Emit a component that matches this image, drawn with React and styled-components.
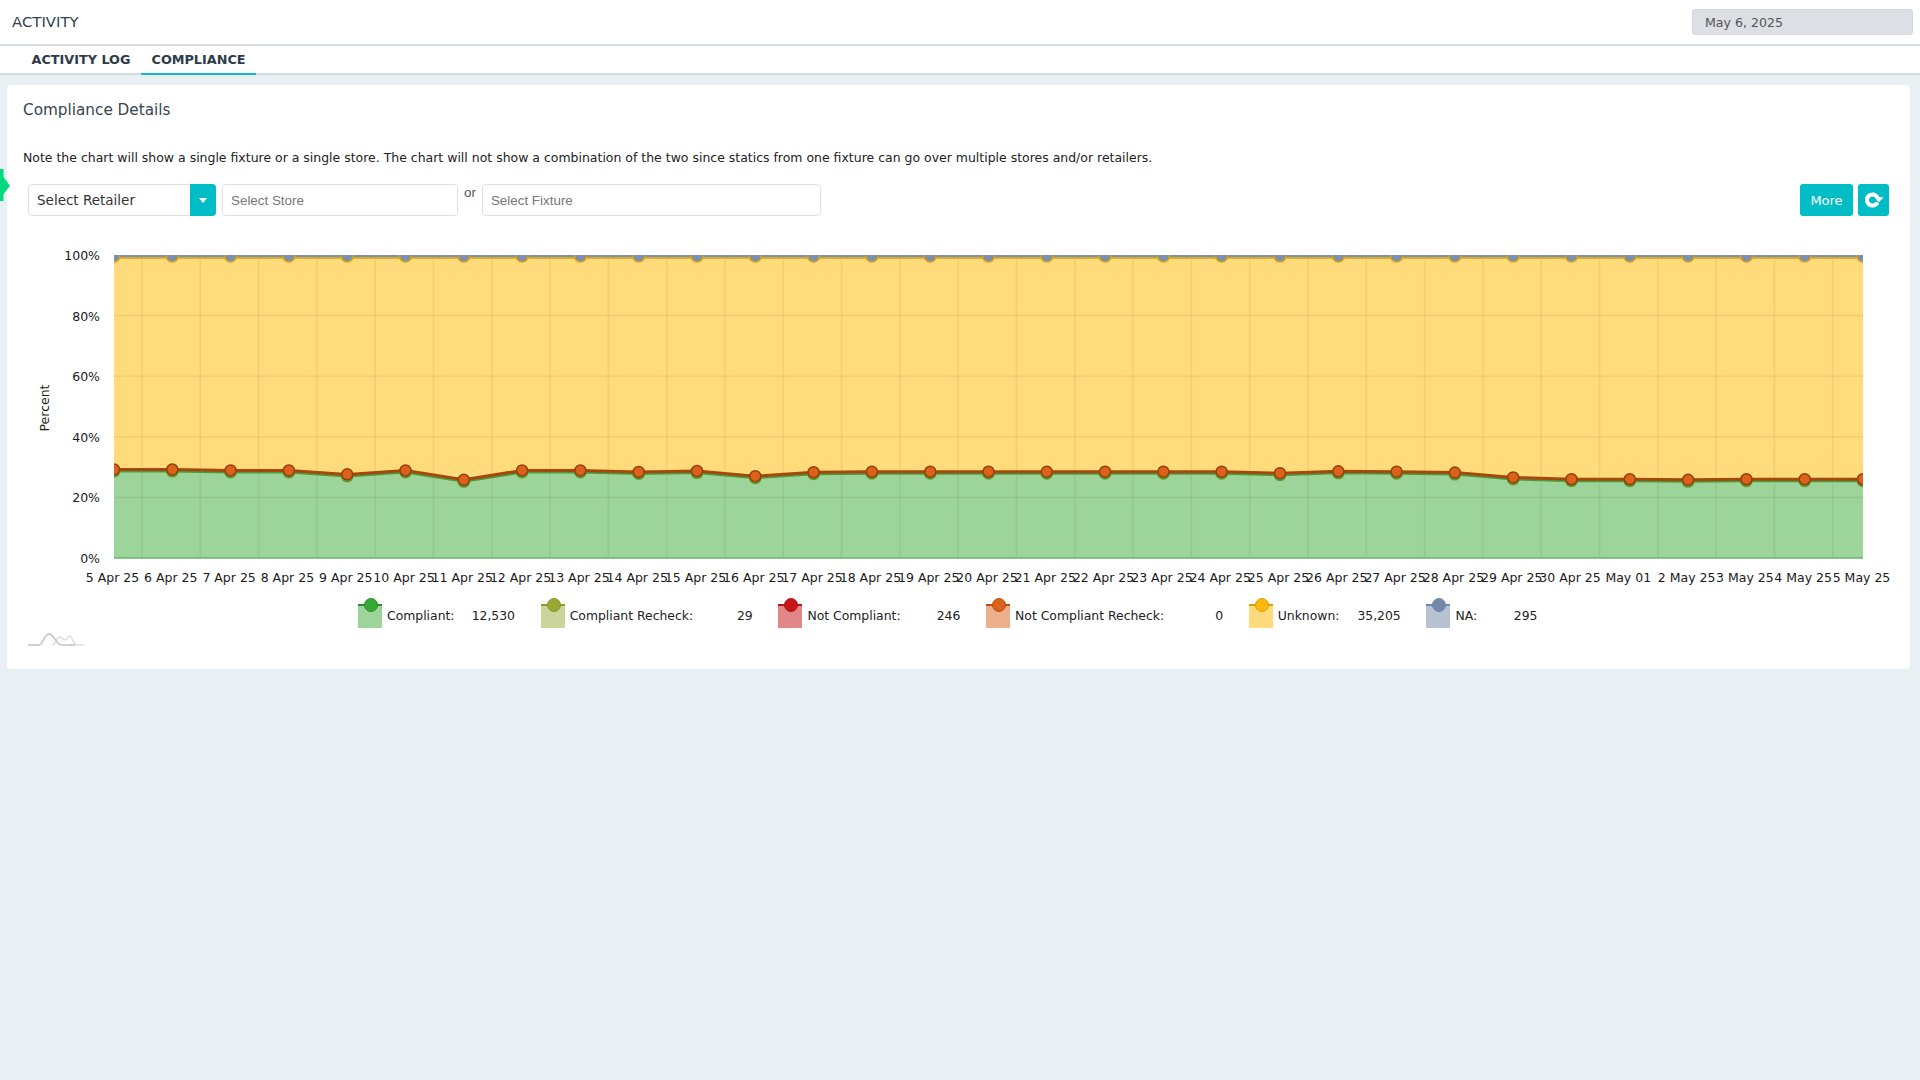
import styled, { createGlobalStyle } from "styled-components";

const GlobalStyle = createGlobalStyle`
  html, body {
    margin: 0;
    padding: 0;
    background: #e8f0f3;
  }
  * {
    box-sizing: border-box;
  }
`;

const sans = `"DejaVu Sans", Verdana, sans-serif`;

const Page = styled.div`
  min-height: 100vh;
  background: #e8f0f3;
  font-family: ${sans};
`;

const Header = styled.header`
  height: 46px;
  padding: 0 7px 0 12px;
  display: flex;
  align-items: center;
  justify-content: space-between;
  background: #fff;
  border-bottom: 2px solid #d3dde4;
`;

const PageTitle = styled.h1`
  margin: 0;
  font-size: 14.9px;
  font-weight: 400;
  color: #33414e;
`;

const DateField = styled.div`
  width: 221px;
  height: 26px;
  padding-left: 12px;
  display: flex;
  align-items: center;
  background: #dcdfe3;
  border: 1px solid #d5d9dd;
  border-radius: 3px;
  font-size: 12.6px;
  color: #555;
`;

const TabBar = styled.nav`
  height: 29px;
  padding-left: 21px;
  display: flex;
  background: #fff;
  border-bottom: 2px solid #d3dde4;
`;

const Tab = styled.div`
  height: 29px;
  padding: 0 10.5px;
  display: flex;
  align-items: center;
  font-size: 12.8px;
  font-weight: 700;
  color: #2d3b4a;
  border-bottom: 2px solid ${(p) => (p.$active ? "#1ab1e0" : "transparent")};
`;

const Main = styled.main`
  padding: 10px 10px 0 7px;
`;

const Card = styled.section`
  position: relative;
  height: 584px;
  padding: 15px 16px 0;
  background: #fff;
  border-radius: 4px;
`;

const CardTitle = styled.h2`
  margin: 0;
  font-size: 15.25px;
  line-height: 20px;
  font-weight: 400;
  color: #36454f;
`;

const Note = styled.p`
  margin: 28px 0 0;
  font-size: 12.47px;
  line-height: 20px;
  color: #222;
`;

const Marker = styled.div`
  position: absolute;
  left: -7px;
  top: 84px;
  width: 10px;
  height: 32px;
  background: #00d97e;
  clip-path: polygon(0 0, 35% 0, 35% 25%, 100% 52%, 35% 78%, 35% 100%, 0 100%);
`;

const FilterRow = styled.div`
  height: 32px;
  margin-top: 16px;
  padding: 0 5px;
  display: flex;
  gap: 6px;
`;

const Select = styled.div`
  width: 188px;
  padding-left: 8px;
  display: flex;
  align-items: center;
  justify-content: space-between;
  border: 1px solid #dbe2e7;
  border-radius: 4px;
  font-size: 13.5px;
  color: #333;
`;

const Caret = styled.span`
  width: 26px;
  height: 32px;
  margin: -1px;
  display: flex;
  align-items: center;
  justify-content: center;
  background: #00bcc5;
  border-radius: 0 4px 4px 0;
  &::after {
    content: "";
    border-top: 5px solid #fff;
    border-left: 4px solid transparent;
    border-right: 4px solid transparent;
  }
`;

const TextInput = styled.input`
  width: ${(p) => p.$width}px;
  padding: 0 8px;
  border: 1px solid #dbe2e7;
  border-radius: 4px;
  outline: none;
  font-family: "Liberation Sans", Arial, sans-serif;
  font-size: 13.4px;
  &::placeholder {
    color: #777;
    opacity: 1;
  }
`;

const Or = styled.span`
  font-family: "Liberation Sans", Arial, sans-serif;
  font-size: 13.4px;
  line-height: 18px;
  color: #555;
`;

const Actions = styled.div`
  margin-left: auto;
  display: flex;
  gap: 5px;
`;

const Button = styled.button`
  width: ${(p) => p.$width}px;
  height: 32px;
  padding: 0;
  display: flex;
  align-items: center;
  justify-content: center;
  background: #00bcc5;
  border: none;
  border-radius: 3px;
  font-family: ${sans};
  font-size: 13px;
  color: #fff;
`;

const ChartSvg = styled.svg`
  display: block;
  margin-top: 24px;
  text {
    font-family: ${sans};
    font-size: 12.5px;
    fill: #1a1a1a;
  }
`;

const Legend = styled.div`
  height: 32px;
  margin-top: 8px;
  padding-left: 335px;
  display: flex;
  gap: 25.7px;
`;

const LegendItem = styled.div`
  width: ${(p) => p.$width}px;
  padding-top: 6px;
  display: flex;
  font-size: 12.4px;
  line-height: 24px;
  color: #222;
`;

const Swatch = styled.span`
  position: relative;
  width: 24px;
  height: 24px;
  margin-right: 5px;
  background: ${(p) => p.$fill};
  border-top: 2px solid ${(p) => p.$line};
  &::after {
    content: "";
    position: absolute;
    left: 6px;
    top: -8px;
    width: 12px;
    height: 12px;
    background: ${(p) => p.$dot};
    border: 1px solid ${(p) => p.$line};
    border-radius: 50%;
  }
`;

const LegendValue = styled.span`
  margin-left: auto;
`;

const Trend = styled.svg`
  display: block;
  margin: 2px 0 0 5px;
`;

const LEFT = 114;
const STEP = 58.3;
const BASE = 558;
const UNIT = 3.03;

const xAt = (i) => LEFT + i * STEP;
const yAt = (v) => BASE - v * UNIT;

const labels = [
  ...Array.from({ length: 26 }, (_, i) => `${i + 5} Apr 25`),
  "May 01",
  "2 May 25",
  "3 May 25",
  "4 May 25",
  "5 May 25",
];

const values = [
  29.2, 29.2, 28.9, 28.9, 27.6, 28.9, 25.8, 28.9, 28.9, 28.4, 28.7, 27, 28.3, 28.5, 28.5, 28.5,
  28.5, 28.5, 28.5, 28.5, 28, 28.6, 28.5, 28.2, 26.6, 26, 26, 25.8, 26, 26, 26,
];

const linePoints = (offset) =>
  values.map((v, i) => `${xAt(i)},${yAt(v + offset)}`).join(" ");

const areaPoints = (offset) =>
  `${LEFT},${BASE} ${linePoints(offset)} ${xAt(30)},${BASE}`;

const legend = [
  { name: "Compliant:", value: "12,530", width: 157, fill: "#9dd49a", line: "#2e8b2e", dot: "#36a836" },
  { name: "Compliant Recheck:", value: "29", width: 212, fill: "#cbd59b", line: "#8a9a2c", dot: "#98a834" },
  { name: "Not Compliant:", value: "246", width: 182, fill: "#e28787", line: "#b0141a", dot: "#c8141c" },
  { name: "Not Compliant Recheck:", value: "0", width: 237, fill: "#ecae8c", line: "#b84e10", dot: "#d9621c" },
  { name: "Unknown:", value: "35,205", width: 152, fill: "#ffdb7c", line: "#d79f0e", dot: "#fdb90a" },
  { name: "NA:", value: "295", width: 111, fill: "#b6c2d2", line: "#6f87a8", dot: "#7389ab" },
];

const Chart = () => (
  <ChartSvg width="1871" height="350" viewBox="23 240 1871 350">
    <defs>
      <clipPath id="plot">
        <rect x="114" y="255" width="1749" height="304" />
      </clipPath>
    </defs>

    <g clipPath="url(#plot)">
      <rect x="114" y="255" width="1749" height="303" fill="#ffdb7c" />
      <polygon points={areaPoints(-0.4)} fill="#9dd49a" />

      {[20, 40, 60, 80].map((v) => (
        <line key={v} x1="114" x2="1863" y1={yAt(v)} y2={yAt(v)} stroke="rgba(70,70,40,0.08)" strokeWidth="1.5" />
      ))}
      {labels.slice(0, 30).map((l, i) => (
        <line key={l} x1={142 + i * STEP} x2={142 + i * STEP} y1="255" y2={BASE} stroke="rgba(70,70,40,0.08)" strokeWidth="1.5" />
      ))}

      <line x1="114" x2="1863" y1="558" y2="558" stroke="#6db26c" strokeWidth="1.5" />

      <rect x="114" y="255" width="1749" height="2.5" fill="#7b8fae" />
      <line x1="114" x2="1863" y1="258" y2="258" stroke="#dda313" strokeWidth="1.5" />
      {values.map((_, i) => (
        <circle key={i} cx={xAt(i)} cy="256" r="6" fill="#7b8fae" stroke="#dda313" strokeWidth="1.5" />
      ))}

      <polyline points={linePoints(-0.5)} fill="none" stroke="#4e9a3f" strokeWidth="3" />
      {values.map((v, i) => (
        <circle key={i} cx={xAt(i)} cy={yAt(v - 0.5)} r="6.5" fill="#5d9a35" />
      ))}
      <polyline points={linePoints(0)} fill="none" stroke="#a5480b" strokeWidth="3" />
      {values.map((v, i) => (
        <circle key={i} cx={xAt(i)} cy={yAt(v)} r="5.5" fill="#dc621c" stroke="#953f0b" strokeWidth="1.5" />
      ))}
    </g>

    {[0, 20, 40, 60, 80, 100].map((v) => (
      <text key={v} x="100" y={yAt(v) + 5} textAnchor="end">
        {v}%
      </text>
    ))}

    <text x="0" y="0" textAnchor="middle" transform="translate(49 408) rotate(-90)">
      Percent
    </text>

    {labels.map((l, i) => (
      <text key={l} x={xAt(i) - 1.5} y="581.5" textAnchor="middle">
        {l}
      </text>
    ))}
  </ChartSvg>
);

const App = () => (
  <Page>
    <GlobalStyle />
    <Header>
      <PageTitle>ACTIVITY</PageTitle>
      <DateField>May 6, 2025</DateField>
    </Header>
    <TabBar>
      <Tab>ACTIVITY LOG</Tab>
      <Tab $active>COMPLIANCE</Tab>
    </TabBar>
    <Main>
      <Card>
        <Marker />
        <CardTitle>Compliance Details</CardTitle>
        <Note>
          Note the chart will show a single fixture or a single store. The chart will not show a
          combination of the two since statics from one fixture can go over multiple stores and/or
          retailers.
        </Note>
        <FilterRow>
          <Select>
            Select Retailer
            <Caret />
          </Select>
          <TextInput $width={236} placeholder="Select Store" />
          <Or>or</Or>
          <TextInput $width={339} placeholder="Select Fixture" />
          <Actions>
            <Button $width={53}>More</Button>
            <Button $width={31} aria-label="Refresh">
              <svg width="22" height="16" viewBox="0 0 22 16">
                <path
                  d="M14.5 5.5 A5.6 5.6 0 1 0 14.5 10.5"
                  fill="none"
                  stroke="#fff"
                  strokeWidth="4"
                />
                <polygon points="11.5,4.5 20.5,5.5 15.5,10.5" fill="#fff" />
              </svg>
            </Button>
          </Actions>
        </FilterRow>
        <Chart />
        <Legend>
          {legend.map((item) => (
            <LegendItem key={item.name} $width={item.width}>
              <Swatch $fill={item.fill} $line={item.line} $dot={item.dot} />
              {item.name}
              <LegendValue>{item.value}</LegendValue>
            </LegendItem>
          ))}
        </Legend>
        <Trend width="56" height="16" viewBox="0 0 56 16">
          <path d="M24 13 C28 13 28 5 32 5 C34 5 35 8 37 8 C39 8 40 4 42 4 C44 4 45 13 49 13 L56 13" fill="none" stroke="#dedede" strokeWidth="1.5" />
          <path d="M0 13 L11 13 C15 13 16 2 21 2 C26 2 28 13 34 13 L47 13" fill="none" stroke="#c2c2c2" strokeWidth="1.5" />
        </Trend>
      </Card>
    </Main>
  </Page>
);

export default App;
